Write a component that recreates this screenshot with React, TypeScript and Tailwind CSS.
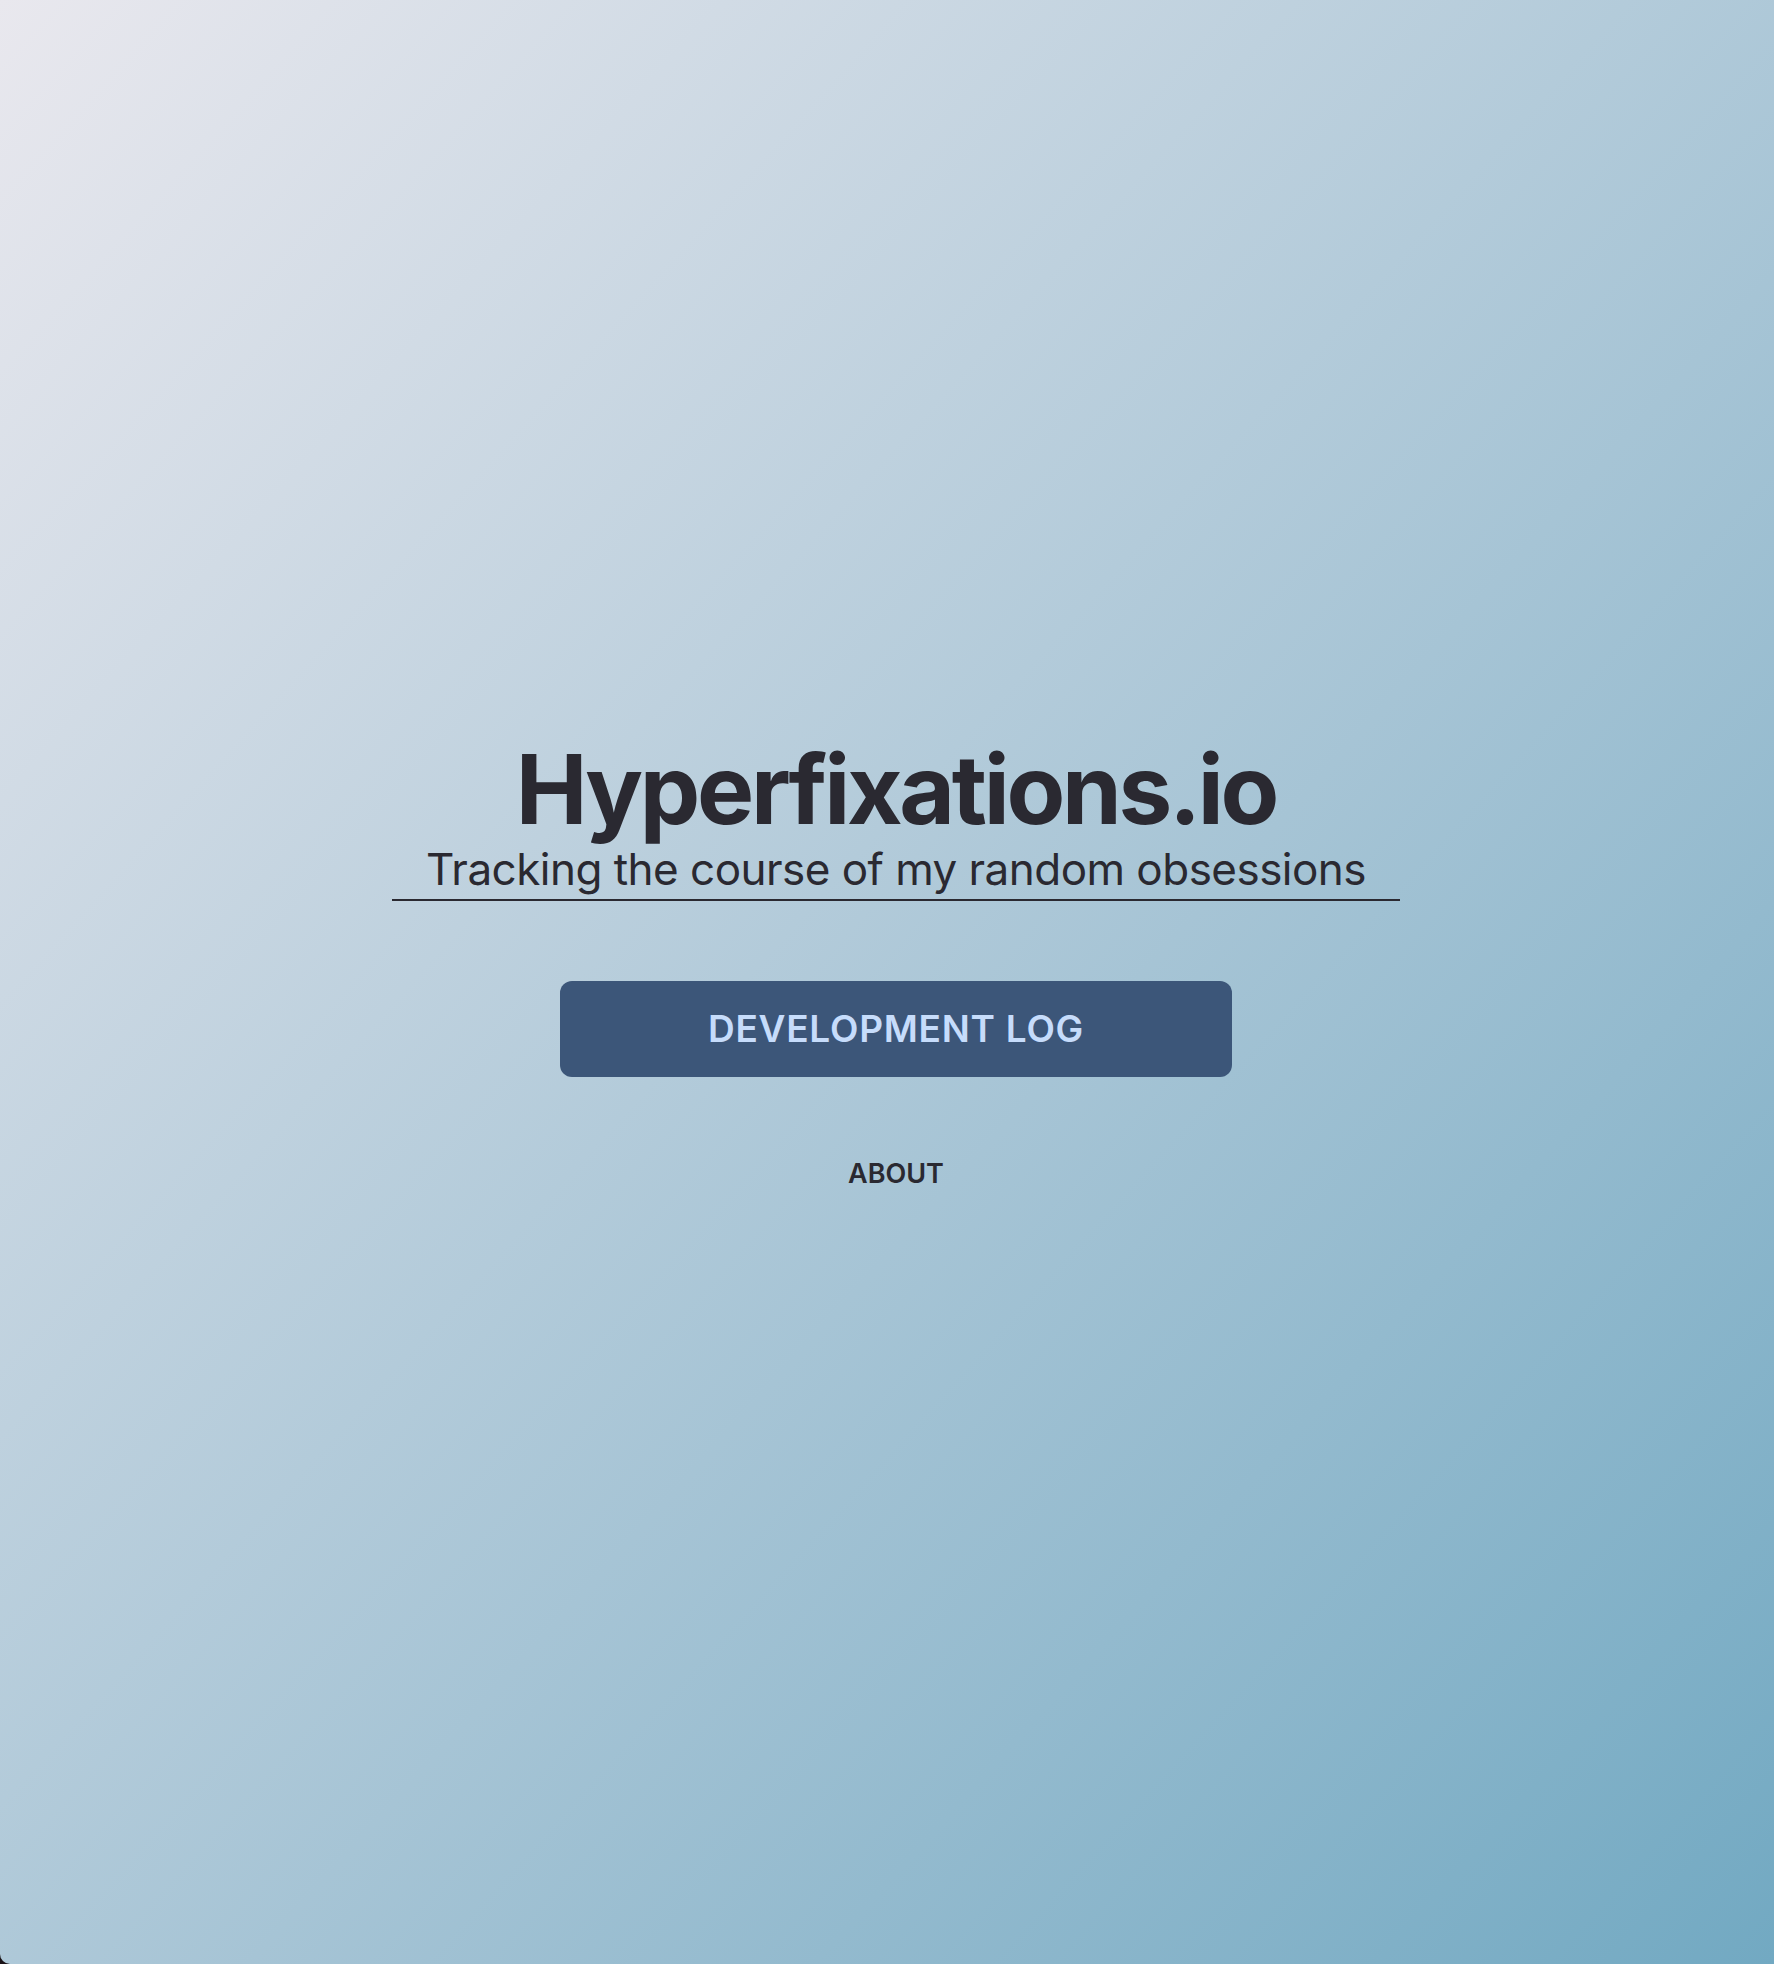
export default function App() {
  return (
    <div className="h-screen w-full bg-[#1a1216]">
      <div
        className="h-full w-full rounded-bl-[10px] bg-linear-to-br from-[#e9e8ee] to-[#72a9c2] flex flex-col items-center pt-[741px] pl-[18px] text-[#2a2931]"
        style={{ fontFamily: 'Inter, "Noto Sans", sans-serif' }}
      >
        <h1 className="text-[96px] font-bold leading-none tracking-[-0.034em]">
          Hyperfixations.io
        </h1>
        <div className="mt-[10px] w-[1008px] border-b-2 border-[#2a2931] pb-[8px] text-center">
          <p className="text-[44px] leading-none tracking-[-0.012em]">
            Tracking the course of my random obsessions
          </p>
        </div>
        <a
          href="#"
          className="mt-[80px] flex h-[96px] w-[672px] items-center justify-center rounded-[12px] bg-[#3c5679] text-[37px] font-semibold tracking-[0.02em] text-[#c6dcfb]"
        >
          DEVELOPMENT LOG
        </a>
        <a href="#" className="mt-[83px] text-[27px] font-semibold leading-none">
          ABOUT
        </a>
      </div>
    </div>
  );
}
